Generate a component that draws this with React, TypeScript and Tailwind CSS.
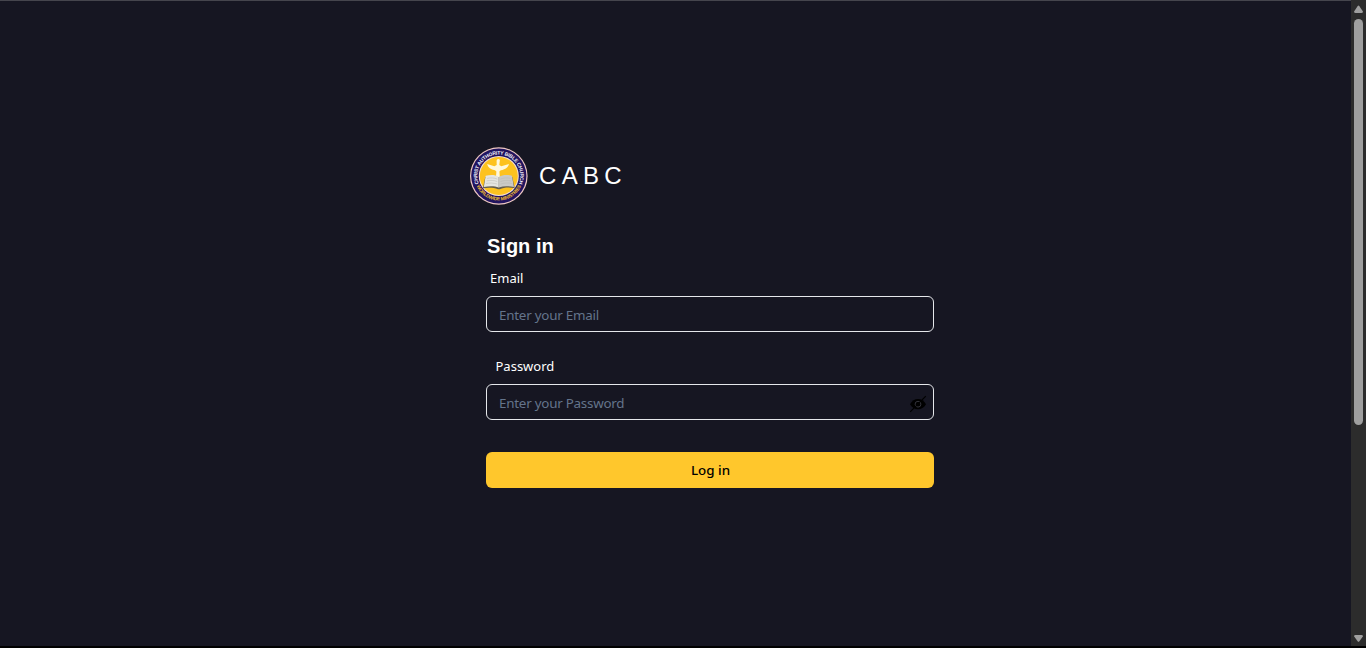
import { useState } from 'react';

function Logo() {
  return (
    <svg className="size-[58px] shrink-0" viewBox="0 0 58 58" role="img" aria-label="CABC">
      <defs>
        <path id="arc-top" d="M 8.7 36.3 A 21.4 21.4 0 1 1 48.9 36.3" />
        <path id="arc-bottom" d="M 6.2 38.2 A 24.4 24.4 0 0 0 51.4 38.2" />
      </defs>
      <circle cx="28.8" cy="29" r="28.8" fill="#f0c9c4" />
      <circle cx="28.8" cy="29" r="27.6" fill="#21145f" />
      <circle cx="28.8" cy="29" r="20" fill="#f3dfd8" />
      <circle cx="28.8" cy="29" r="19" fill="#fdc21f" />
      <text fill="#f1eef8" fontSize="5.1" fontWeight="700" fontFamily="Liberation Sans, sans-serif">
        <textPath href="#arc-top" startOffset="50%" textAnchor="middle" textLength="83">CHRIST AUTHORITY BIBLE CHURCH</textPath>
      </text>
      <text fill="#f2bd32" fontSize="4.8" fontWeight="700" fontFamily="Liberation Sans, sans-serif">
        <textPath href="#arc-bottom" startOffset="50%" textAnchor="middle" textLength="56">WORLDWIDE MINISTRIES</textPath>
      </text>
      <path fill="#fff8dc" d="M26.600 13.800c.3-2.200 2.600-2.500 3.300-.7l-.6 5 2 1.200 7.700-2.300c-1 3.400-3.100 5.300-8.200 6.300l-1.400 1.200.5 6.500h-4l.5-6.500-1.400-1.200c-4.400-.8-6.800-2.700-7.900-6.300l7.300 2.300 2.300-1.200Z" />
      <path fill="#645e4f" d="m15.300 30-2.400 11.200c5.400-.9 11-.8 15 1h2c4.200-1.900 9.200-2 14.800-1L42.300 30Z" />
      <path fill="#e5e5e1" d="M15.700 28.800c5-1.400 9.500-1.200 13.100 1.100v10.700c-4.300-1.600-9.300-1.700-15-.5Z" />
      <path fill="#cacac6" d="M28.800 29.900c4.300-2.300 8.500-2.400 13.100-1.100l2 11.300c-5.700-1.200-10.300-1.100-15.100.5Z" />
      <path fill="none" stroke="#b9b8b2" strokeWidth=".5" d="M17 31.400c4-.8 7.300-.7 10.300.7M16.600 33.900c4-.8 7.400-.7 10.700.7M16 36.500c4-.8 7.500-.6 11.300.6M30.300 32.100c3.400-1.400 6.800-1.500 10.500-.7M30.400 34.600c3.500-1.400 7-1.500 11-.7M30.500 37.100c3.500-1.300 7.300-1.500 11.400-.6M28.800 30v10.500" />
    </svg>
  );
}

function HiddenEye() {
  return (
    <svg className="size-[18px]" viewBox="0 0 18 18" aria-hidden="true">
      <path fill="#000" d="M1 9.2C2.9 5.8 5.8 4 9 4s6.200 1.800 8 5.200C15.200 12.600 12.200 14.300 9 14.300S2.900 12.600 1 9.200Z" />
      <circle cx="9" cy="9.200" r="2.900" fill="none" stroke="#33333b" />
      <path fill="none" stroke="#000" strokeWidth="1.200" d="M1.200 16.800 16.800 1.200" />
    </svg>
  );
}

function Scrollbar() {
  return (
    <div className="flex w-[15px] shrink-0 flex-col items-center bg-[#2c2c2c] pt-[5px]" aria-hidden="true">
      <svg className="h-2 w-[9px]" viewBox="0 0 9 8"><path fill="#9f9f9f" d="M3.6 1.2Q4.5 0 5.4 1.2L8.8 6.2Q9.2 8 7.5 8h-6Q-.2 8 .2 6.2Z" /></svg>
      <div className="mt-[6px] h-[406px] w-[9px] rounded-full bg-[#9f9f9f]" />
      <svg className="mt-auto mb-1 h-[7px] w-[9px]" viewBox="0 0 9 7"><path fill="#9f9f9f" d="M3.6 6.2Q4.5 7.4 5.4 6.2L8.8 1.5Q9.2 0 7.5 0h-6Q-.2 0 .2 1.5Z" /></svg>
    </div>
  );
}

const inputClass =
  'block h-9 w-full rounded-md border border-[#e5e7eb] bg-transparent px-3 pt-[2px] text-[13.4px] tracking-[-0.24px] text-white outline-none placeholder:text-[#64748b]';

export default function App() {
  const [visible, setVisible] = useState(false);
  return (
    <div className="flex h-[648px] w-full overflow-hidden border-b-2 border-black bg-[#161622] font-['Noto_Sans','Open_Sans',sans-serif]">
      <main className="flex-1 border-t border-[#45454d] pt-[146px] pl-[470px]">
        <header className="flex items-center gap-[11px]">
          <Logo />
          <span className="font-['Liberation_Sans',sans-serif] text-[24px] leading-8 tracking-[5.3px] text-white">CABC</span>
        </header>
        <form className="ml-4 w-[448px] pt-[27px]" onSubmit={(e) => e.preventDefault()}>
          <h1 className="pl-px font-['Liberation_Sans',sans-serif] text-[20px] leading-7 font-bold text-white">Sign in</h1>
          <label htmlFor="email" className="mt-2 block pl-1 text-[13px] leading-5 text-white">Email</label>
          <input id="email" type="email" placeholder="Enter your Email" className={`${inputClass} mt-2`} />
          <label htmlFor="password" className="mt-6 block pl-[9.5px] text-[13px] leading-5 text-white">Password</label>
          <div className="relative mt-2">
            <input id="password" type={visible ? 'text' : 'password'} placeholder="Enter your Password" className={inputClass} />
            <button type="button" aria-label="Toggle password" onClick={() => setVisible(!visible)} className="absolute top-[11px] right-[7px]">
              <HiddenEye />
            </button>
          </div>
          <button type="submit" className="mt-8 h-9 w-full rounded-md bg-[#ffc72c] pl-px text-[13.4px] font-medium text-black">Log in</button>
        </form>
      </main>
      <Scrollbar />
    </div>
  );
}
